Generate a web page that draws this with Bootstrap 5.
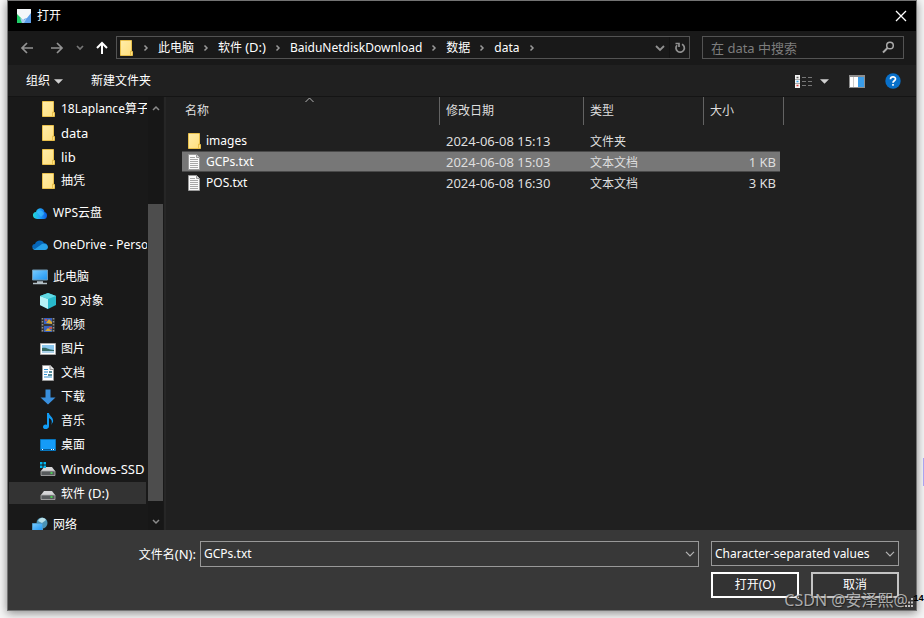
<!DOCTYPE html>
<html lang="zh-CN" data-bs-theme="dark">
<head>
<meta charset="utf-8">
<meta name="viewport" content="width=device-width, initial-scale=1">
<title>打开</title>
<link href="https://cdn.jsdelivr.net/npm/bootstrap@5.3.0/dist/css/bootstrap.min.css" rel="stylesheet">
<style>
body{background:#f6f6f6;font-family:"Noto Sans","Noto Sans CJK SC",sans-serif;font-size:12px;line-height:16px;color:#fff;height:100vh;overflow:hidden;padding:0 7px 7px}
.lat{font-size:13px}
button,input,select{font:inherit;color:inherit;background:none;border:0;padding:0;outline:0}
a{color:inherit;text-decoration:none}
svg{display:block;flex:none}
.dialog-win{border:1px solid #737373;background:#202020;height:100%;box-shadow:0 2px 9px rgba(0,0,0,.45)}
.title-strip{background:#000;height:30px;padding:0 9px;gap:6px}
.nav-strip{background:#191919;height:35px;padding:0 12px}
.recent{margin-left:12px}
.go-up{margin-left:12px}
.address{border:1px solid #535353;height:23px;padding-left:3px;margin-left:8px}
.address ol{margin:0;padding:0;list-style:none}
.address li svg{margin:0 8px}
.refresh{border-left:1px solid #131313;height:21px;width:20px}
.search-field{border:1px solid #535353;width:202px;height:23px;padding:0 8px;margin-left:12px}
.search-field input{color:#fff;min-width:0}
.search-field input::placeholder{color:#7d7d7d;opacity:1}
.tool-strip{height:33px;border-bottom:1px solid #141414;padding:1px 15px 0 18px}
.tool-icons{gap:20px}
.side{width:158px;background:#191919;border-right:2px solid #262626}
.tree{width:139px}
.tree a{height:24px;padding-left:32px;gap:5px;white-space:nowrap;overflow:hidden;flex:none}
.tree a.root{padding-left:24px}
.tree a.gap-above{margin-top:8px}
.tree a.current{background:#333;height:22px;margin:1px;padding-left:31px}
.scroll-track{width:15px;background:#171717;margin-left:1px}
.thumb{background:#4d4d4d;margin-top:93px;height:297px;flex:0 1 auto}
.files{border-collapse:separate;border-spacing:0;width:602px;table-layout:fixed;margin-left:16px;color:#dedede}
.files th{font-weight:400;height:28px;border-right:1px solid #636363;padding:0 6px;position:relative}
.files th:first-child{padding-left:3px}
.files thead::after{content:"";display:block;height:5px}
.files td{height:21px;padding:2px 6px 0;white-space:nowrap}
.files td.lat{padding-top:0}
.files td:first-child{padding:0 0 0 4px;color:#fff}
.files td:last-child{border-right:4px solid transparent;background-clip:padding-box;padding-right:4px;text-align:right}
.files tr.picked td{background-color:#777;box-shadow:inset 0 1px #4a4a4a,inset 0 -1px #4a4a4a}
.sort-mark{position:absolute;top:0;left:123px}
.foot{background:#383838;padding:11px 17px 12px;gap:12px}
.name-label{width:175px;text-align:right}
.combo{border:1px solid #999;height:26px;padding:0 3px}
.combo svg,.wrap svg{color:#b5b5b5}
.foot select{appearance:none;border:1px solid #999;height:25px;width:100%;padding:0 20px 0 3px;background:#333}
.pick{width:188px;gap:6px}
.wrap{position:relative}
.wrap svg{position:absolute;right:4px;top:10px;pointer-events:none}
.act{width:88px;height:26px;border:2px solid #c4c4c4;background:#333}
.act.main-act{border-color:#fff}
.grip{position:absolute;right:2px;bottom:2px}
.credit{position:absolute;right:8px;bottom:-2px;font-size:16px;line-height:24px;color:rgba(215,215,215,.75);text-shadow:1px 1px 1px #222;white-space:nowrap}
.edge-num{position:absolute;right:-8px;bottom:3px;font:700 9px/16px "Liberation Mono",monospace;color:#000}
.edge-bar{position:absolute;right:0;top:458px;width:1px;height:28px;background:#a9a4f0}
</style>
<script src="https://cdn.jsdelivr.net/npm/bootstrap@5.3.0/dist/js/bootstrap.bundle.min.js"></script>
</head>
<body>
<svg width="0" height="0" class="position-absolute" aria-hidden="true">
<defs>
<linearGradient id="fg" x1="0" y1="0" x2="1" y2="1"><stop offset="0" stop-color="#ffedaa"/><stop offset="1" stop-color="#ffdf7c"/></linearGradient>
<linearGradient id="bl" x1="0" y1="0" x2="1" y2="1"><stop offset="0" stop-color="#79ccff"/><stop offset="1" stop-color="#1c94f2"/></linearGradient>
<linearGradient id="cl" x1="0" y1="0" x2="1" y2="0"><stop offset="0" stop-color="#20d8d4"/><stop offset=".45" stop-color="#22a9fb"/><stop offset="1" stop-color="#0757dd"/></linearGradient>
<symbol id="folder" viewBox="0 0 16 16"><path d="M2.500.5h11v11h1v4h-12z" fill="url(#fg)" stroke="#e9c04c"/><path d="M12.500 15v-4h1.500" fill="none" stroke="#e9c04c"/></symbol>
<symbol id="doc" viewBox="0 0 16 16"><path d="M2.500.5h8l3 3v12h-11z" fill="#fafafa" stroke="#9b9b9b"/><path d="M10.500.5v3h3" fill="#ddd" stroke="#9b9b9b"/><path d="M4 3.500h5M4 5.500h8M4 7.500h8M4 9.500h8M4 11.500h8M4 13.500h8" stroke="#a7a7a7"/></symbol>
<symbol id="sep" viewBox="0 0 8 8"><path d="M2.500 1.500 5 4 2.500 6.500" fill="none" stroke="#999" stroke-width="1.500"/></symbol>
<symbol id="down" viewBox="0 0 10 6"><path d="M1 .8 5 4.800 9 .8" fill="none" stroke="currentColor" stroke-width="1.200"/></symbol>
<symbol id="drive" viewBox="0 0 16 16"><path d="m4 6h8l3 4H1z" fill="#d5d5d7"/><path d="M1 10h14v4.500H1z" fill="#575a5c" stroke="#b0b0b0" stroke-width=".8"/><path d="M10.500 12h2" stroke="#43ef4f" stroke-width="1.500"/></symbol>
</defs>
</svg>
<div class="dialog-win d-flex flex-column position-relative">
  <header class="title-strip d-flex align-items-center">
    <svg width="14" height="14" viewBox="0 0 14 14"><path d="M0 0h14v14H0z" fill="#f4f7fa"/><path d="m0 5 4 4 2 3-1 2H0z" fill="#20cc68"/><path d="M14 4v10H5l2-4 3-1z" fill="#5d9fea"/><path d="m3 9 4 2 3-2-3 5H5z" fill="#a5cbee"/></svg>
    <span class="flex-fill">打开</span>
    <button type="button" aria-label="关闭"><svg width="12" height="12" viewBox="0 0 12 12"><path d="m1 1 10 10M11 1 1 11" stroke="#fff" stroke-width="1.300"/></svg></button>
  </header>
  <nav class="nav-strip d-flex align-items-center" aria-label="导航">
    <button type="button" aria-label="后退"><svg width="14" height="12" viewBox="0 0 14 12"><path d="M13 6H2M7 1 2 6l5 5" fill="none" stroke="#939393" stroke-width="1.700"/></svg></button>
    <button type="button" class="ms-3" aria-label="前进"><svg width="14" height="12" viewBox="0 0 14 12"><path d="M1 6h11M7 1l5 5-5 5" fill="none" stroke="#939393" stroke-width="1.700"/></svg></button>
    <button type="button" class="recent" aria-label="最近的位置"><svg width="8" height="6" viewBox="0 0 8 6"><path d="M1 1l3 3 3-3" fill="none" stroke="#777" stroke-width="1.700"/></svg></button>
    <button type="button" class="go-up" aria-label="上移"><svg width="12" height="14" viewBox="0 0 12 14"><path d="M6 13V2M1 7l5-5 5 5" fill="none" stroke="#fff" stroke-width="2"/></svg></button>
    <div class="address d-flex align-items-center flex-fill">
      <svg width="14" height="16" viewBox="2 0 14 16"><use href="#folder" width="16" height="16"/></svg>
      <ol class="d-flex align-items-center flex-fill">
        <li><svg width="8" height="8"><use href="#sep"/></svg></li>
        <li class="d-flex align-items-center"><a href="#">此电脑</a><svg width="8" height="8"><use href="#sep"/></svg></li>
        <li class="d-flex align-items-center"><a href="#">软件 <span class="lat">(D:)</span></a><svg width="8" height="8"><use href="#sep"/></svg></li>
        <li class="d-flex align-items-center"><a href="#">BaiduNetdiskDownload</a><svg width="8" height="8"><use href="#sep"/></svg></li>
        <li class="d-flex align-items-center"><a href="#">数据</a><svg width="8" height="8"><use href="#sep"/></svg></li>
        <li class="d-flex align-items-center"><a href="#">data</a><svg width="8" height="8"><use href="#sep"/></svg></li>
      </ol>
      <button type="button" class="me-1" aria-label="历史记录"><svg width="10" height="8" viewBox="0 0 10 8"><path d="m1 2 4 4 4-4" fill="none" stroke="#919191" stroke-width="1.800"/></svg></button>
      <button type="button" class="refresh d-flex align-items-center justify-content-center" aria-label="刷新"><svg width="12" height="12" viewBox="0 0 12 12"><path d="M8 2.200A4.200 4.200 0 1 1 3 3.200" fill="none" stroke="#919191" stroke-width="1.700"/><path d="M1.500 1.500H5V5" fill="none" stroke="#919191" stroke-width="1.700"/></svg></button>
    </div>
    <div class="search-field d-flex align-items-center">
      <input class="lat flex-fill" type="search" aria-label="搜索" placeholder="在 data 中搜索">
      <svg width="13" height="13" viewBox="0 0 13 13"><circle cx="8" cy="4.500" r="3.300" fill="none" stroke="#aaa" stroke-width="1.500"/><path d="M5.500 7 1 11.500" stroke="#aaa" stroke-width="2"/></svg>
    </div>
  </nav>
  <div class="tool-strip d-flex align-items-center">
    <button type="button" class="d-flex align-items-center">组织<svg width="9" height="5" viewBox="0 0 8 4" class="ms-1"><path d="M0 0h8L4 4z" fill="#d0d0d0"/></svg></button>
    <button type="button" class="ms-4 ps-1 me-auto">新建文件夹</button>
    <div class="tool-icons d-flex align-items-center">
    <button type="button" class="d-flex align-items-center" aria-label="更改视图">
      <svg width="17" height="13" viewBox="0 0 17 13"><path d="M0 0h5v13H0z" fill="#f4f4f4"/><path d="M0 4.500h5M0 8.500h5" stroke="#aaa"/><path d="M1.500 2.500h2" stroke="#555" stroke-width="1.500"/><path d="M1.500 6.500h2" stroke="#36a5ec" stroke-width="1.500"/><path d="M1.500 10.500h2" stroke="#d44" stroke-width="1.500"/><path d="M7 2.500h10M7 6.500h10M7 10.500h10" stroke="#777" stroke-dasharray="4 2"/></svg>
      <svg width="9" height="5" viewBox="0 0 8 4" class="ms-2"><path d="M0 0h8L4 4z" fill="#d0d0d0"/></svg>
    </button>
    <button type="button" aria-label="预览窗格"><svg width="16" height="13" viewBox="0 0 16 13"><path d="M0 0h16v13H0z" fill="#8e8e8e"/><path d="M1 2h8v10H1z" fill="#fff"/><path d="M4.500 2v10" stroke="#ccc"/><path d="M9 2h6v10H9z" fill="#3a9de9"/></svg></button>
    <button type="button" aria-label="帮助"><svg width="16" height="16" viewBox="0 0 16 16"><circle cx="8" cy="8" r="7.700" fill="#0870ca"/><path d="M5.500 6.200c0-3 5-3 5-.2 0 1.800-2.500 1.700-2.500 3.700M8 11v1.800" fill="none" stroke="#fff" stroke-width="1.700"/></svg></button>
    </div>
  </div>
  <main class="d-flex flex-fill overflow-hidden">
    <aside class="side d-flex flex-shrink-0">
      <nav class="tree d-flex flex-column overflow-hidden" aria-label="文件夹">
        <a href="#" class="d-flex align-items-center"><svg width="16" height="16"><use href="#folder"/></svg>18Laplance算子</a>
        <a href="#" class="d-flex align-items-center"><svg width="16" height="16"><use href="#folder"/></svg><span class="lat">data</span></a>
        <a href="#" class="d-flex align-items-center"><svg width="16" height="16"><use href="#folder"/></svg><span class="lat">lib</span></a>
        <a href="#" class="d-flex align-items-center"><svg width="16" height="16"><use href="#folder"/></svg>抽凭</a>
        <a href="#" class="d-flex align-items-center root gap-above"><svg width="16" height="16" viewBox="0 0 16 16"><path d="M5 14C-.5 14 0 7 4 7c1-5 8-5 8.500 0C16 7.500 16 14 12 14z" fill="url(#cl)"/><path d="M5 7c2-3 7-1 7 2l-3 3z" fill="#45c2ff" opacity=".6"/></svg>WPS云盘</a>
        <a href="#" class="d-flex align-items-center root gap-above"><svg width="16" height="16" viewBox="0 0 16 16"><path d="M3 12C-1 12-.5 7 3 7c1-4 7-5 9-1 2 0 3 1 3.500 3L12 12z" fill="#0767b9"/><path d="m3 12 7-5c2-1 6 0 6 3 0 1-1 3-3 3H4c-2 0-3-.5-3.500-2z" fill="#28a1e9"/></svg>OneDrive - Personal</a>
        <a href="#" class="d-flex align-items-center root gap-above"><svg width="16" height="16" viewBox="0 0 16 16"><path d="M.5 1h15v10H.5z" fill="url(#bl)" stroke="#7198b2"/><path d="M5 13h6M1 14.500h14" stroke="#b4c0c7" stroke-width="1.500"/></svg>此电脑</a>
        <a href="#" class="d-flex align-items-center"><svg width="16" height="16" viewBox="0 0 16 16"><path d="m0 3 8-3 8 3v9l-8 4-8-4z" fill="#28b9cb"/><path d="m0 3 8 3v10l-8-4z" fill="#b8f2f6"/><path d="m0 3 8-3 8 3-8 3z" fill="#62d9e4"/></svg>3D 对象</a>
        <a href="#" class="d-flex align-items-center"><svg width="16" height="16" viewBox="0 0 16 16"><path d="M1 1h14v14H1z" fill="#333"/><path d="M2.500 1v14M13.500 1v14" stroke="#909090" stroke-width="1.500" stroke-dasharray="1.500 1.500"/><path d="M4 1h8v6H4zM4 9h8v6H4z" fill="#3861bf"/><path d="m6 6 3-4 3 3v2zM5 14l3-3 4 3z" fill="#d9a92f"/><path d="M5 2h2v2H5zM9 10h3v2H9z" fill="#c45652"/></svg>视频</a>
        <a href="#" class="d-flex align-items-center"><svg width="16" height="16" viewBox="0 0 16 16"><path d="M.5 2.500h15v11H.5z" fill="#fff" stroke="#a9a9a9"/><path d="M2 4h12v8H2z" fill="#8bc8ef"/><path d="M2 7c5-1 6 2 12 2v1H2z" fill="#346a64"/><path d="M2 10h12v2H2z" fill="#a9cfe8"/></svg>图片</a>
        <a href="#" class="d-flex align-items-center"><svg width="16" height="16" viewBox="0 0 16 16"><path d="M2.500.5h8l3 3v12h-11z" fill="#fff" stroke="#999"/><path d="M10 .5v4h3" fill="#ddd" stroke="#999"/><path d="M4 4.500h4M4 7h4M4 9.500h3M4 12h8" stroke="#3292d0" stroke-width="1.200"/><path d="M9 6h3v2H9zM8 9h4v2H8z" fill="#578d9c"/></svg>文档</a>
        <a href="#" class="d-flex align-items-center"><svg width="16" height="16" viewBox="0 0 16 16"><path d="M5.500.5h5v8h5L8 15.500.5 8.500h5z" fill="#398fdd"/></svg>下载</a>
        <a href="#" class="d-flex align-items-center"><svg width="16" height="16" viewBox="0 0 16 16"><path d="M7 0h2c0 3 5 4 4 9l-2 3c2-4 0-6-2-7v8c0 4-6 4-6 1 0-2 2-3 4-2z" fill="#129cf4"/></svg>音乐</a>
        <a href="#" class="d-flex align-items-center"><svg width="16" height="16" viewBox="0 0 16 16"><path d="M.5 2.500h15v11H.5z" fill="#159bf7" stroke="#0875bc"/><path d="M1 12.500h14" stroke="#075b98"/><path d="M2 12.500h1M11 12.500h1M13 12.500h1" stroke="#fff"/></svg>桌面</a>
        <a href="#" class="d-flex align-items-center"><svg width="16" height="16" viewBox="0 0 16 16"><use href="#drive" width="16" height="16"/><path d="M0 1h2.500v2.500H0zM3.500 1H6v2.500H3.500zM0 4.500h2.500V7H0zM3.500 4.500H6V7H3.500z" fill="#00b5ef"/></svg><span class="lat">Windows-SSD</span></a>
        <a href="#" class="d-flex align-items-center current" aria-current="true"><svg width="16" height="16"><use href="#drive"/></svg><span>软件 <span class="lat">(D:)</span></span></a>
        <a href="#" class="d-flex align-items-center root gap-above"><svg width="16" height="16" viewBox="0 0 16 16"><circle cx="10" cy="6" r="5.500" fill="#4b93b4"/><path d="M6 4c2-4 6-4 8-1l-4 3z" fill="#b8dfe8"/><path d="M.5 6.500h10v7H.5z" fill="url(#bl)" stroke="#4f9bc8"/></svg>网络</a>
      </nav>
      <div class="scroll-track d-flex flex-column">
        <svg class="mx-auto mt-2" width="8" height="6" viewBox="0 0 8 6"><path d="M1 5l3-3 3 3" fill="none" stroke="#8b8b8b" stroke-width="1.500"/></svg>
        <div class="thumb"></div>
        <svg class="mx-auto mt-auto mb-1" width="8" height="8" viewBox="0 0 8 8"><path d="M1 2l3 3 3-3" fill="none" stroke="#8b8b8b" stroke-width="1.500"/></svg>
      </div>
    </aside>
    <section class="flex-fill overflow-hidden" aria-label="文件列表">
      <table class="files">
        <colgroup><col><col width="144"><col width="120"><col width="80"></colgroup>
        <thead><tr><th scope="col">名称<svg class="sort-mark" width="9" height="6" viewBox="0 0 9 6"><path d="m.5 5 4-4 4 4" fill="none" stroke="#b5b5b5"/></svg></th><th scope="col">修改日期</th><th scope="col">类型</th><th scope="col">大小</th></tr></thead>
        <tbody>
          <tr><td><span class="d-flex align-items-center"><svg width="16" height="16" class="me-1"><use href="#folder"/></svg>images</span></td><td class="lat">2024-06-08 15:13</td><td>文件夹</td><td></td></tr>
          <tr class="picked"><td><span class="d-flex align-items-center"><svg width="16" height="16" class="me-1"><use href="#doc"/></svg>GCPs.txt</span></td><td class="lat">2024-06-08 15:03</td><td>文本文档</td><td class="lat">1 KB</td></tr>
          <tr><td><span class="d-flex align-items-center"><svg width="16" height="16" class="me-1"><use href="#doc"/></svg>POS.txt</span></td><td class="lat">2024-06-08 16:30</td><td>文本文档</td><td class="lat">3 KB</td></tr>
        </tbody>
      </table>
    </section>
  </main>
  <form class="foot d-flex align-items-start">
    <div class="d-flex flex-fill align-items-center">
      <label class="name-label pe-1" for="fname">文件名<span class="lat">(N):</span></label>
      <div class="combo d-flex flex-fill align-items-center"><input id="fname" class="flex-fill" type="text" value="GCPs.txt"><button type="button" aria-label="展开"><svg width="10" height="6"><use href="#down"/></svg></button></div>
    </div>
    <div class="pick d-flex flex-column">
      <div class="wrap"><select aria-label="文件类型"><option>Character-separated values</option></select><svg width="10" height="6"><use href="#down"/></svg></div>
      <div class="d-flex justify-content-between"><button type="button" class="act main-act">打开(O)</button><button type="button" class="act">取消</button></div>
    </div>
  </form>
  <svg class="grip" width="10" height="10" viewBox="0 0 10 10"><path d="M7 0h2v2H7zM4 3.500h2v2H4zM7 3.500h2v2H7zM1 7h2v2H1zM4 7h2v2H4zM7 7h2v2H7z" fill="#c2c2c2"/></svg>
  <div class="edge-num">14</div>
  <div class="credit">CSDN @安泽熙@</div>
</div>
<div class="edge-bar"></div>
</body>
</html>
